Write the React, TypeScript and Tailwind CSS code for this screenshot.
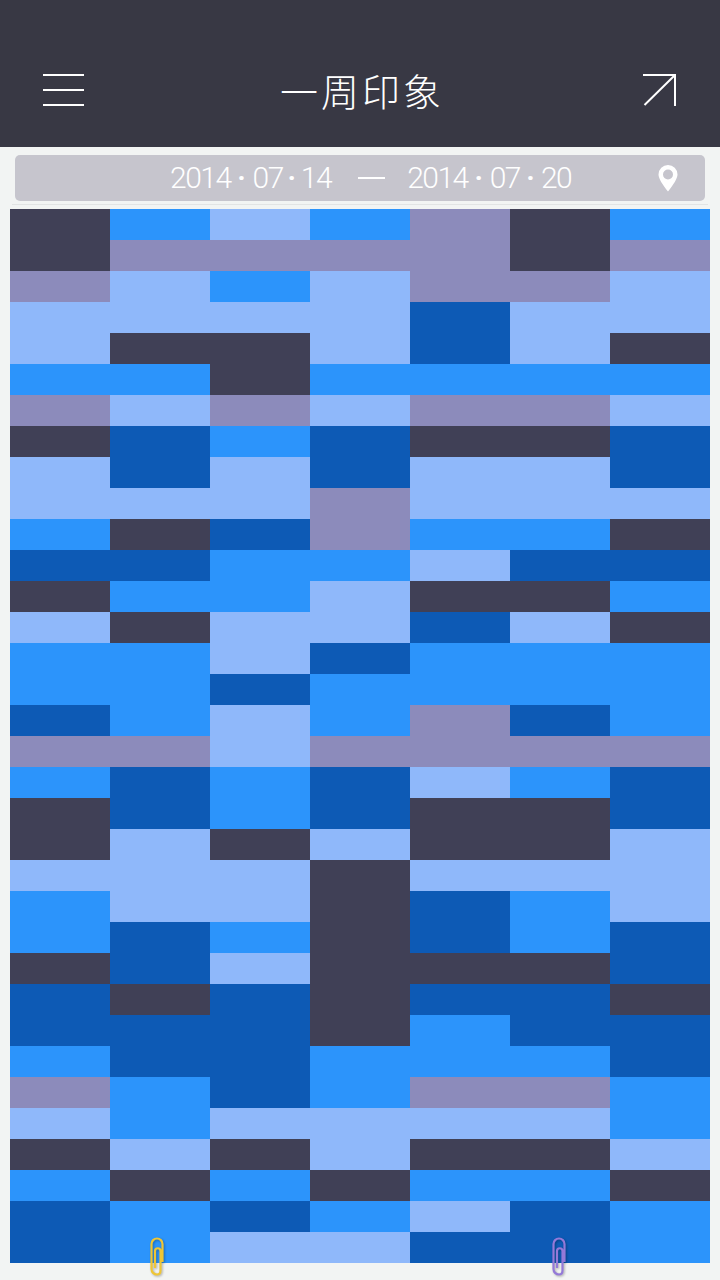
const D = "bg-[#404056]";
const B = "bg-[#2c94fb]";
const L = "bg-[#8fb8fa]";
const N = "bg-[#0d5ab5]";
const P = "bg-[#8c8bbb]";

type Block = [string, number];

// one list per weekday, each block is [colour, rows it covers]
const columns: Block[][] = [
  [[D,2],[P,1],[L,2],[B,1],[P,1],[D,1],[L,2],[B,1],[N,1],[D,1],[L,1],[B,2],[N,1],[P,1],[B,1],[D,2],[L,1],[B,2],[D,1],[N,2],[B,1],[P,1],[L,1],[D,1],[B,1],[N,2]],
  [[B,1],[P,1],[L,2],[D,1],[B,1],[L,1],[N,2],[L,1],[D,1],[N,1],[B,1],[D,1],[B,3],[P,1],[N,2],[L,3],[N,2],[D,1],[N,2],[B,2],[L,1],[D,1],[B,2]],
  [[L,1],[P,1],[B,1],[L,1],[D,2],[P,1],[B,1],[L,2],[N,1],[B,2],[L,2],[N,1],[L,2],[B,2],[D,1],[L,2],[B,1],[L,1],[N,4],[L,1],[D,1],[B,1],[N,1],[L,1]],
  [[B,1],[P,1],[L,3],[B,1],[L,1],[N,2],[P,2],[B,1],[L,2],[N,1],[B,2],[P,1],[N,2],[L,1],[D,6],[B,2],[L,2],[D,1],[B,1],[L,1]],
  [[P,3],[N,2],[B,1],[P,1],[D,1],[L,2],[B,1],[L,1],[D,1],[N,1],[B,2],[P,2],[L,1],[D,2],[L,1],[N,2],[D,1],[N,1],[B,2],[P,1],[L,1],[D,1],[B,1],[L,1],[N,1]],
  [[D,2],[P,1],[L,2],[B,1],[P,1],[D,1],[L,2],[B,1],[N,1],[D,1],[L,1],[B,2],[N,1],[P,1],[B,1],[D,2],[L,1],[B,2],[D,1],[N,2],[B,1],[P,1],[L,1],[D,1],[B,1],[N,2]],
  [[B,1],[P,1],[L,2],[D,1],[B,1],[L,1],[N,2],[L,1],[D,1],[N,1],[B,1],[D,1],[B,3],[P,1],[N,2],[L,3],[N,2],[D,1],[N,2],[B,2],[L,1],[D,1],[B,2]],
];

function Clip({ color, className }: { color: string; className: string }) {
  return (
    <svg viewBox="0 0 14 39" fill="none" stroke={color} strokeWidth="2.200" className={className}>
      <path d="M12.500 25V7a5.500 5.500 0 0 0-11 0v25a5.500 5.500 0 0 0 5.500 5.500c2 0 3.500-1.500 3.500-4V14a2.750 2.750 0 0 0-5.500 0v17" />
    </svg>
  );
}

function DateText({ y, m, d, lastDot }: { y: string; m: string; d: string; lastDot: string }) {
  return (
    <span className="flex items-center tracking-[-1.500px]">
      <span>{y}</span>
      <span className="w-[22px] text-center text-[28px] font-bold leading-none tracking-normal">·</span>
      <span>{m}</span>
      <span className={`${lastDot} text-center text-[28px] font-bold leading-none tracking-normal`}>·</span>
      <span>{d}</span>
    </span>
  );
}

export default function App() {
  return (
    <div className="relative h-[1280px] w-[720px] overflow-hidden bg-[#f2f4f3] font-['Roboto','Noto_Sans_CJK_SC',sans-serif]">
      <header className="flex h-[147px] items-start justify-between bg-[#383844] pl-[43px] pr-[44px] pt-[74px] text-white">
        <div className="flex h-[32px] w-[41px] flex-col justify-between">
          <div className="h-[2px] bg-white" />
          <div className="h-[2px] bg-white" />
          <div className="h-[2px] bg-white" />
        </div>
        <h1 className="-mt-[4px] mr-[3px] text-[38px] font-light leading-[40px] tracking-[3px] font-['Noto_Sans_CJK_SC',sans-serif]">
          一周印象
        </h1>
        <svg viewBox="0 0 33 32" width="33" height="32" fill="none" stroke="white" strokeWidth="2">
          <path d="M0 1h32v31M31.500 1.500 1.500 31" />
        </svg>
      </header>

      <div className="mx-[15px] mt-[8px] flex h-[46px] items-center rounded-[5px] bg-[#c6c5cd] pb-[1px] pl-[155px] pr-[27px] text-[30px] font-light text-white">
        <DateText y="2014" m="07" d="14" lastDot="w-[18px]" />
        <span className="ml-[27px] mr-[22px] h-[2px] w-[27px] bg-white" />
        <DateText y="2014" m="07" d="20" lastDot="w-[21px]" />
        <svg viewBox="0 0 20 27" width="20" height="27" className="ml-auto mt-[1px]">
          <path fill="white" fillRule="evenodd" d="M10 0a9.500 9.500 0 0 1 9.500 9.500c0 4-4 10-9.500 17C4.500 19.500.5 13.500.5 9.500A9.500 9.500 0 0 1 10 0Zm0 4.500a5 5 0 1 0 0 10 5 5 0 0 0 0-10Z" />
        </svg>
      </div>
      <div className="mx-[12px] mt-[3px] h-px bg-[#e2e4e4]" />

      <div className="mx-[10px] mt-[4px] flex">
        {columns.map((blocks, i) => (
          <div key={i} className="flex w-[100px] flex-col">
            {blocks.map(([color, rows], j) => (
              <div key={j} className={color} style={{ height: rows * 31 }} />
            ))}
          </div>
        ))}
      </div>

      <Clip color="#efc635" className="absolute left-[150px] top-[1237px] h-[39px] w-[14px] drop-shadow-[1px_1px_1px_rgba(0,0,0,0.3)]" />
      <Clip color="#9479d8" className="absolute left-[552px] top-[1237px] h-[39px] w-[14px] drop-shadow-[1px_1px_1px_rgba(0,0,0,0.3)]" />
    </div>
  );
}
